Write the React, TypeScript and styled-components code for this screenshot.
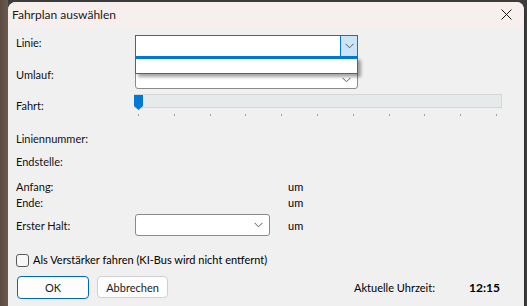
import React from 'react';
import styled, { createGlobalStyle } from 'styled-components';

const Global = createGlobalStyle`
  html, body { margin: 0; padding: 0; }
  body {
    width: 527px;
    height: 306px;
    overflow: hidden;
    background: #4b4643;
    font-family: Lato, "Liberation Sans", sans-serif;
    font-size: 11px;
    color: #000;
  }
`;

const Page = styled.div`
  height: 306px;
  box-sizing: border-box;
  padding: 2px 2px 0 8px;
  background: linear-gradient(to right, #5b4a3f 0, #6a5a4f 8px, #3c3c3c 8px);
  display: flex;
`;

const Window = styled.div`
  flex: 1;
  display: flex;
  flex-direction: column;
  border-radius: 8px 8px 0 0;
  overflow: hidden;
  border-right: 1px solid #2e2e2e;
  background: #f0f0f0;
`;

const TitleBar = styled.div`
  height: 25px;
  flex: none;
  display: flex;
  align-items: center;
  justify-content: space-between;
  padding: 0 12px 0 4px;
  background: #f7eeee;
  font-size: 12px;
  color: #1a1a1a;
`;

const Body = styled.div`
  flex: 1;
  display: flex;
  flex-direction: column;
  padding: 0 0 0 8px;
`;

const Row = styled.div<{ $mt: number; $h: number }>`
  display: flex;
  align-items: flex-start;
  margin-top: ${(p) => p.$mt}px;
  height: ${(p) => p.$h}px;
  flex: none;
`;

const Label = styled.div<{ $pt?: number }>`
  width: 119px;
  flex: none;
  line-height: 16px;
  padding-top: ${(p) => p.$pt ?? 0}px;
  color: #101010;
`;

const Value = styled.div`
  width: 153px;
  flex: none;
`;

const Um = styled.div<{ $pt?: number }>`
  line-height: 16px;
  padding-top: ${(p) => p.$pt ?? 0}px;
`;

const ComboWrap = styled.div`
  position: relative;
  width: 223px;
`;

const Combo = styled.div<{ $w: number; $focus?: boolean }>`
  width: ${(p) => p.$w}px;
  height: 22px;
  box-sizing: border-box;
  background: #fff;
  border: 1px solid ${(p) => (p.$focus ? '#0078d7' : '#8a8a8a')};
  border-radius: ${(p) => (p.$focus ? '0' : '3px')};
  display: flex;
  justify-content: flex-end;
  align-items: stretch;
`;

const DropButton = styled.div<{ $active?: boolean; $low?: boolean }>`
  width: 16px;
  display: flex;
  align-items: ${(p) => (p.$low ? 'flex-end' : 'center')};
  padding-bottom: ${(p) => (p.$low ? 5 : 0)}px;
  justify-content: center;
  background: ${(p) => (p.$active ? '#cce4f7' : 'transparent')};
  border-left: 1px solid ${(p) => (p.$active ? '#0078d7' : 'transparent')};
  margin-right: ${(p) => (p.$active ? 0 : 3)}px;
`;

const Popup = styled.div`
  position: absolute;
  left: 0;
  top: 22px;
  width: 223px;
  height: 17px;
  box-sizing: border-box;
  background: #fff;
  border: 1px solid #0078d7;
  border-top-width: 2px;
  box-shadow: 3px 3px 3px rgba(0, 0, 0, 0.35);
  z-index: 2;
`;

const SliderBox = styled.div`
  width: 368px;
  display: flex;
  flex-direction: column;
  margin-left: -1px;
`;

const Track = styled.div`
  position: relative;
  height: 14px;
  box-sizing: border-box;
  background: #e7eaea;
  border: 1px solid #d6d6d6;
`;

const Thumb = styled.svg`
  position: absolute;
  left: -1px;
  top: 0;
`;

const Ticks = styled.div`
  display: flex;
  justify-content: space-between;
  padding: 6px 5px 0 4px;
`;

const Tick = styled.div`
  width: 1px;
  height: 2px;
  background: #a0a0a0;
`;

const CheckRow = styled.label`
  display: flex;
  align-items: center;
  gap: 4px;
  line-height: 16px;
`;

const CheckBox = styled.div`
  width: 13px;
  height: 13px;
  box-sizing: border-box;
  border: 1px solid #5a5a5a;
  border-radius: 3px;
  background: #f7f7f7;
`;

const Footer = styled.div`
  display: flex;
  align-items: flex-start;
  gap: 8px;
  width: 100%;
  margin-left: 1px;
`;

const Button = styled.div<{ $primary?: boolean }>`
  width: ${(p) => (p.$primary ? 72 : 71)}px;
  height: ${(p) => (p.$primary ? 23 : 22)}px;
  box-sizing: border-box;
  display: flex;
  align-items: center;
  justify-content: center;
  background: #fdfdfd;
  border: ${(p) => (p.$primary ? '1.5px solid #0067c0' : '1px solid #d0d0d0')};
  border-radius: 4px;
  color: #1a1a1a;
`;

const Clock = styled.div`
  margin-left: auto;
  display: flex;
  align-items: center;
  height: 23px;
  padding-right: 24px;
`;

const ClockLabel = styled.span`
  width: 115px;
`;

const ClockValue = styled.span`
  font-weight: bold;
  font-size: 12px;
`;

const Chevron: React.FC = () => (
  <svg width="9" height="6" viewBox="0 0 9 6">
    <path d="M0.5 0.8 L4.5 4.8 L8.5 0.8" fill="none" stroke="#5a5a5a" strokeWidth="1" />
  </svg>
);

export default function App() {
  const ticks = Array.from({ length: 11 });
  return (
    <>
      <Global />
      <Page>
        <Window>
          <TitleBar>
            <span>Fahrplan auswählen</span>
            <svg width="11" height="11" viewBox="0 0 11 11">
              <path d="M0.5 0.5 L10.5 10.5 M10.5 0.5 L0.5 10.5" stroke="#1a1a1a" strokeWidth="1" />
            </svg>
          </TitleBar>
          <Body>
            <Row $mt={8} $h={22}>
              <Label>Linie:</Label>
              <ComboWrap>
                <Combo $w={223} $focus>
                  <DropButton $active>
                    <Chevron />
                  </DropButton>
                </Combo>
                <Popup />
              </ComboWrap>
            </Row>
            <Row $mt={10} $h={22}>
              <Label>Umlauf:</Label>
              <Combo $w={223}>
                <DropButton $low>
                  <Chevron />
                </DropButton>
              </Combo>
            </Row>
            <Row $mt={5} $h={23}>
              <Label $pt={4}>Fahrt:</Label>
              <SliderBox>
                <Track>
                  <Thumb width="9" height="15" viewBox="0 0 9 15">
                    <path d="M0 0 H9 V11 L4.5 15 L0 11 Z" fill="#0078d7" />
                  </Thumb>
                </Track>
                <Ticks>
                  {ticks.map((_, i) => (
                    <Tick key={i} />
                  ))}
                </Ticks>
              </SliderBox>
            </Row>
            <Row $mt={14} $h={16}>
              <Label>Liniennummer:</Label>
            </Row>
            <Row $mt={7} $h={16}>
              <Label>Endstelle:</Label>
            </Row>
            <Row $mt={9} $h={16}>
              <Label>Anfang:</Label>
              <Value />
              <Um>um</Um>
            </Row>
            <Row $mt={0} $h={16}>
              <Label>Ende:</Label>
              <Value />
              <Um>um</Um>
            </Row>
            <Row $mt={3} $h={21}>
              <Label $pt={4}>Erster Halt:</Label>
              <Value>
                <Combo $w={135}>
                  <DropButton>
                    <Chevron />
                  </DropButton>
                </Combo>
              </Value>
              <Um $pt={4}>um</Um>
            </Row>
            <Row $mt={17} $h={16}>
              <CheckRow>
                <CheckBox />
                Als Verstärker fahren (KI-Bus wird nicht entfernt)
              </CheckRow>
            </Row>
            <Row $mt={8} $h={23}>
              <Footer>
                <Button $primary>OK</Button>
                <Button>Abbrechen</Button>
                <Clock>
                  <ClockLabel>Aktuelle Uhrzeit:</ClockLabel>
                  <ClockValue>12:15</ClockValue>
                </Clock>
              </Footer>
            </Row>
          </Body>
        </Window>
      </Page>
    </>
  );
}
